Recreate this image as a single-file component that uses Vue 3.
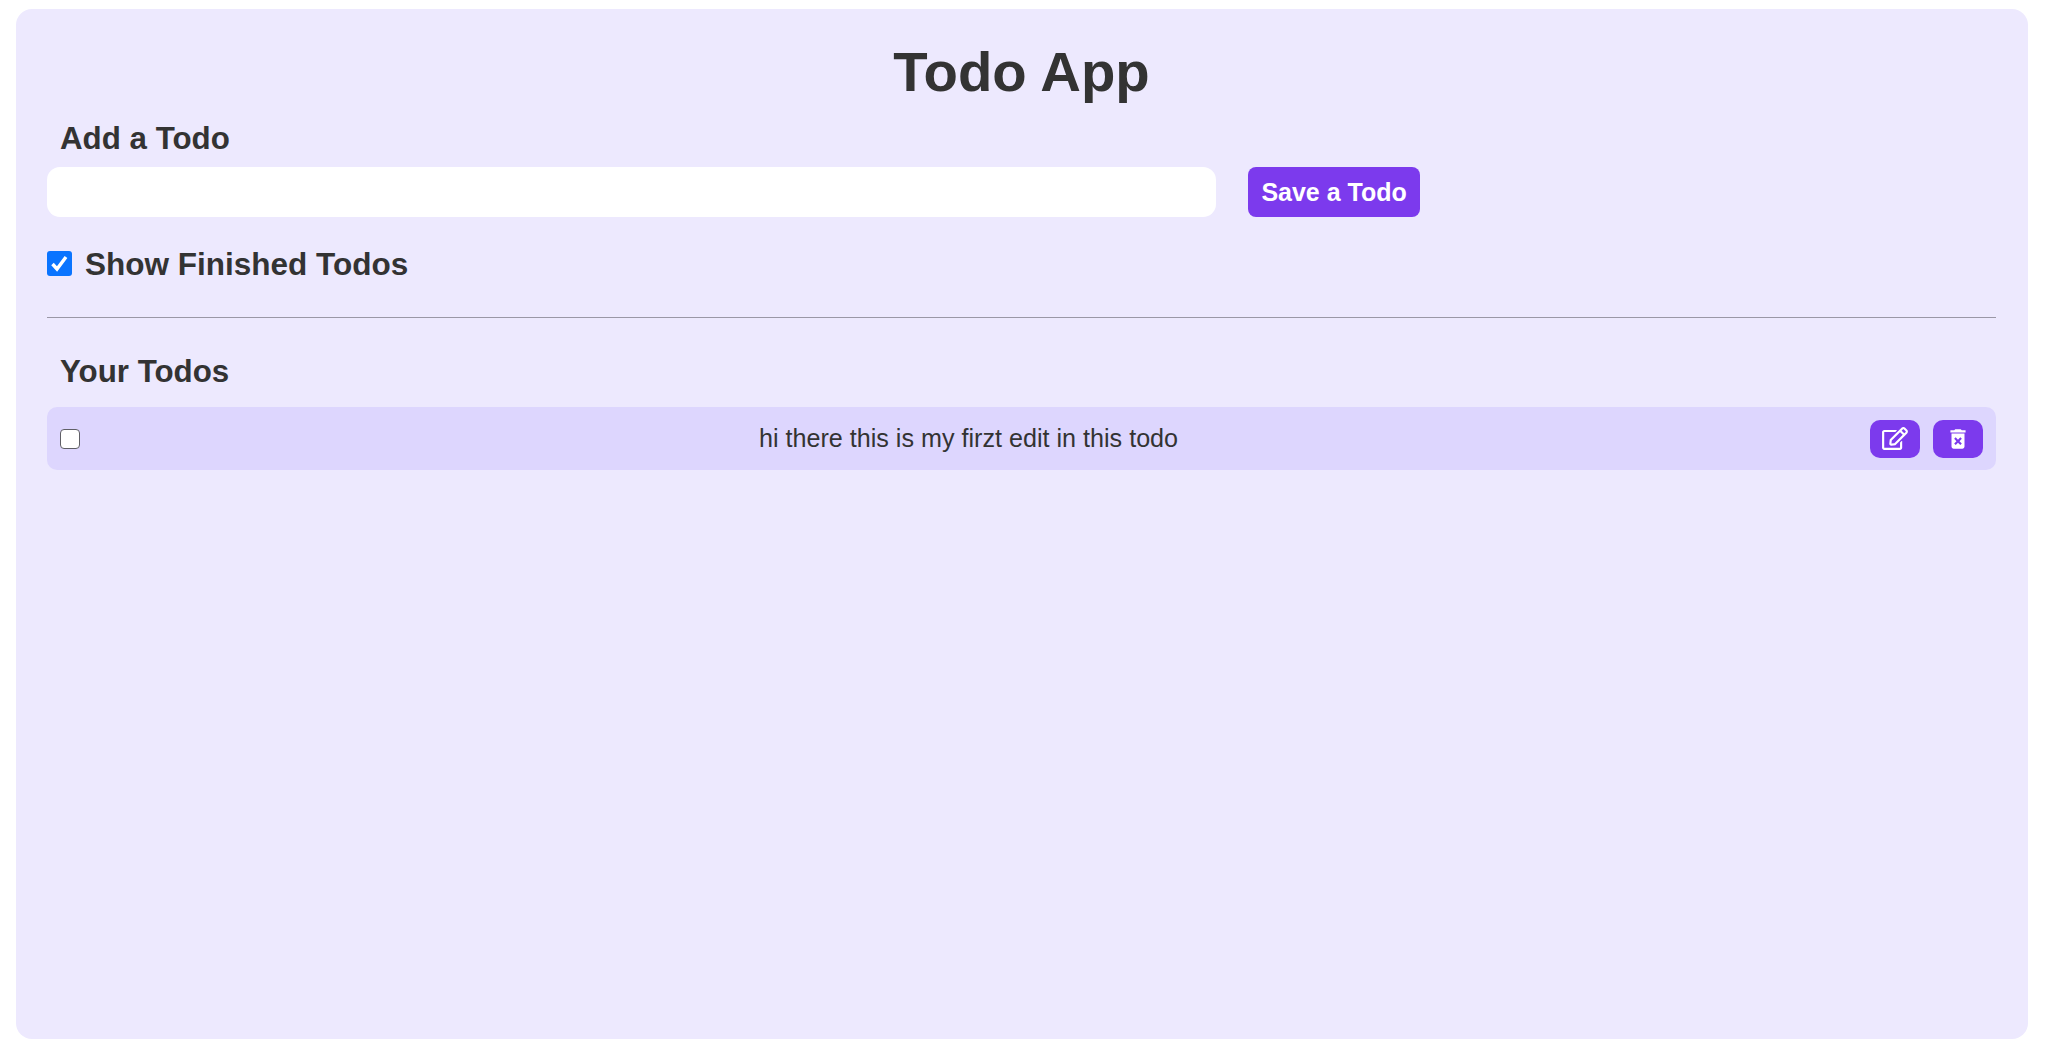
<script setup>
import { ref } from "vue"

const todo = ref("")
const showFinished = ref(true)
const todos = ref([
  { id: 1, text: "hi there this is my firzt edit in this todo", done: false }
])
</script>

<template>
  <div class="container">
    <h1 class="title">Todo App</h1>
    <section class="add-todo">
      <h2 class="heading">Add a Todo</h2>
      <div class="add-row">
        <input v-model="todo" type="text" class="todo-input" />
        <button class="btn save-btn">Save a Todo</button>
      </div>
    </section>
    <label class="show-finished">
      <input v-model="showFinished" type="checkbox" class="check-big" />
      Show Finished Todos
    </label>
    <div class="divider"></div>
    <h2 class="heading">Your Todos</h2>
    <div class="todo-list">
      <div v-for="item in todos" :key="item.id" class="todo-row">
        <input v-model="item.done" type="checkbox" class="check-small" />
        <p class="todo-text">{{ item.text }}</p>
        <div class="actions">
          <button class="btn icon-btn" aria-label="Edit">
            <svg class="edit-icon" viewBox="0 0 576 512" fill="currentColor">
              <path d="M402.3 344.9l32-32c5-5 13.7-1.5 13.7 5.7V464c0 26.5-21.5 48-48 48H48c-26.5 0-48-21.5-48-48V112c0-26.5 21.5-48 48-48h273.5c7.1 0 10.7 8.6 5.7 13.7l-32 32c-1.5 1.5-3.5 2.3-5.7 2.3H48v352h352V350.5c0-2.1.8-4.1 2.3-5.6zm156.6-201.8L296.3 405.7l-90.4 10c-26.2 2.9-48.5-19.2-45.6-45.6l10-90.4L432.9 17.1c22.9-22.9 59.9-22.9 82.7 0l43.2 43.2c22.9 22.9 22.9 60 .1 82.8zM460.1 174L402 115.9 216.2 301.8l-7.3 65.3 65.3-7.3L460.1 174zm64.8-79.7l-43.2-43.2c-4.1-4.1-10.8-4.1-14.8 0L436 82l58.1 58.1 30.9-30.9c4-4.2 4-10.8-.1-14.9z" />
            </svg>
          </button>
          <button class="btn icon-btn" aria-label="Delete">
            <svg class="delete-icon" viewBox="0 0 24 24" fill="currentColor">
              <path d="M6 19c0 1.1.9 2 2 2h8c1.1 0 2-.9 2-2V7H6v12zm2.46-7.12 1.41-1.41L12 12.59l2.12-2.12 1.41 1.41L13.41 14l2.12 2.12-1.41 1.41L12 15.41l-2.12 2.12-1.41-1.41L10.59 14l-2.13-2.12zM15.5 4l-1-1h-5l-1 1H5v2h14V4z" />
            </svg>
          </button>
        </div>
      </div>
    </div>
  </div>
</template>

<style scoped>
.container {
  box-sizing: border-box;
  width: 2012px;
  height: 1030px;
  margin: 9px 0 0 16px;
  padding: 33px 32px 0 31px;
  background-color: #ede9fe;
  border-radius: 16px;
  color: #333;
  font-family: "Liberation Sans", Arial, sans-serif;
}

.title {
  margin: 0;
  font-size: 56.3px;
  line-height: 60px;
  font-weight: 700;
  text-align: center;
}

.add-todo {
  margin-top: 19px;
}

.heading {
  margin: 0;
  padding-left: 13px;
  font-size: 31.3px;
  line-height: 36px;
  font-weight: 700;
}

.add-row {
  display: flex;
  gap: 32px;
  margin-top: 10px;
}

.todo-input {
  box-sizing: border-box;
  width: 60%;
  height: 50px;
  border: none;
  border-radius: 13px;
  background: #fff;
  outline: none;
}

.btn {
  border: none;
  background-color: #7c3aed;
  color: #fff;
  border-radius: 10px;
  font-family: inherit;
  font-weight: 700;
}

.save-btn {
  height: 50px;
  padding: 0 13px;
  border-radius: 8px;
  font-size: 25px;
}

.show-finished {
  display: flex;
  align-items: center;
  gap: 13px;
  margin-top: 29px;
  height: 36px;
  font-size: 31.5px;
  font-weight: 700;
}

.check-big {
  appearance: none;
  box-sizing: border-box;
  width: 25px;
  height: 25px;
  margin: -2px 0 0;
  border-radius: 3px;
  background: #0a74ff url("data:image/svg+xml,%3Csvg xmlns='http://www.w3.org/2000/svg' viewBox='0 0 25 25'%3E%3Cpath d='M5.5 13l4.5 5 9-12' fill='none' stroke='white' stroke-width='3.4'/%3E%3C/svg%3E");
}

.divider {
  height: 1px;
  margin-top: 35px;
  margin-bottom: 36px;
  background-color: #9a97a6;
}

.todo-list {
  margin-top: 17px;
}

.todo-row {
  display: flex;
  align-items: center;
  height: 63px;
  padding: 0 13px;
  background-color: #ddd6fe;
  border-radius: 10px;
}

.check-small {
  appearance: none;
  box-sizing: border-box;
  width: 20px;
  height: 20px;
  margin: 0;
  background: #fff;
  border: 1.5px solid #5f5f66;
  border-radius: 4px;
}

.todo-text {
  flex: 1;
  margin: 0;
  padding-right: 13px;
  font-size: 25.15px;
  text-align: center;
}

.actions {
  display: flex;
  gap: 13px;
}

.icon-btn {
  display: flex;
  align-items: center;
  justify-content: center;
  width: 50px;
  height: 38px;
  padding: 0;
}

.edit-icon {
  width: 26px;
  height: 23px;
}

.delete-icon {
  width: 26px;
  height: 26px;
}
</style>

<style>
html,
body {
  margin: 0;
  background: #fff;
}
</style>
